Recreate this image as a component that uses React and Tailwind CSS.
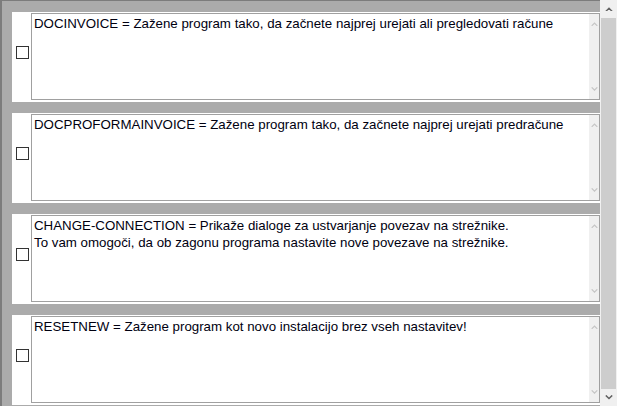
const rows = [
  ["DOCINVOICE = Zažene program tako, da začnete najprej urejati ali pregledovati račune"],
  ["DOCPROFORMAINVOICE = Zažene program tako, da začnete najprej urejati predračune"],
  [
    "CHANGE-CONNECTION = Prikaže dialoge za ustvarjanje povezav na strežnike.",
    "To vam omogoči, da ob zagonu programa nastavite nove povezave na strežnike.",
  ],
  ["RESETNEW = Zažene program kot novo instalacijo brez vseh nastavitev!"],
];

const Chevron = ({ up, color, size = 8 }) => (
  <svg width={size} height={size * 0.6} viewBox="0 0 10 6">
    <path
      d={up ? "M1 5.5 L5 1.5 L9 5.5" : "M1 0.5 L5 4.5 L9 0.5"}
      fill="none"
      stroke={color}
      strokeWidth="1.8"
    />
  </svg>
);

const Row = ({ lines }) => (
  <div className="flex h-[90px] shrink-0 bg-white pt-px pb-[2px]">
    <div className="flex w-[19px] justify-end pr-[2px] pt-[33px]">
      <div className="h-[13px] w-[13px] border border-[#333333] bg-white" />
    </div>
    <div className="flex flex-1 border border-[#a0a0a0] bg-white">
      <div className="flex-1 px-[2px] pt-px text-[13.3px] leading-[17px] text-[#000010]">
        {lines.map((l, i) => (
          <div key={i}>{l}</div>
        ))}
      </div>
      <div className="flex w-[10px] flex-col items-center justify-between bg-[#f0f0f0] py-[8px]">
        <Chevron up color="#c6c6c6" size={7} />
        <Chevron color="#c6c6c6" size={7} />
      </div>
    </div>
  </div>
);

export default function App() {
  return (
    <div
      className="flex h-[406px] w-[617px] overflow-hidden bg-[#ababab]"
      style={{ fontFamily: '"Liberation Sans", Arial, sans-serif' }}
    >
      <div className="flex flex-1 flex-col gap-[11px] border-l-2 border-t border-[#7c7c7c] pl-[10px] pt-[11px]">
        {rows.map((r, i) => (
          <Row key={i} lines={r} />
        ))}
      </div>
      <div className="flex w-[17px] flex-col bg-[#f0f0f0]">
        <div className="flex h-[18px] items-center justify-center">
          <Chevron up color="#606060" size={8} />
        </div>
        <div className="mx-auto w-[15px] flex-1 bg-[#cdcdcd]" />
        <div className="flex h-[17px] items-center justify-center">
          <Chevron color="#606060" size={8} />
        </div>
      </div>
    </div>
  );
}
